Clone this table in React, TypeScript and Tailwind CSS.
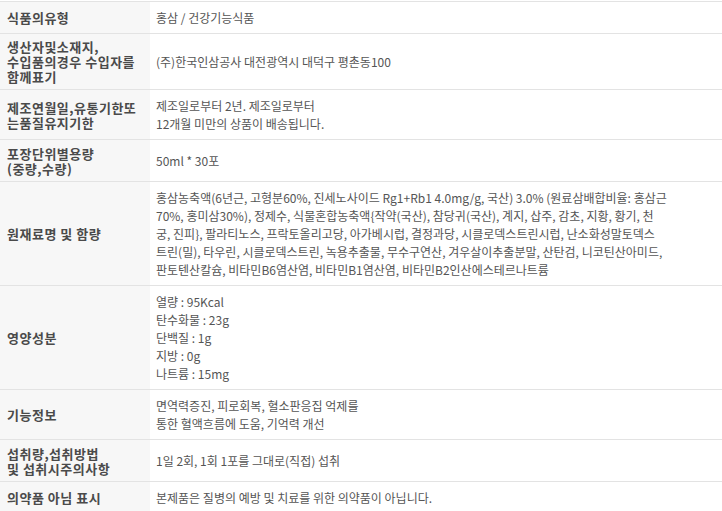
import React from "react";

type Row = { h: string; label: React.ReactNode; value: React.ReactNode };

const rows: Row[] = [
  { h: "h-[32px]", label: "식품의유형", value: "홍삼 / 건강기능식품" },
  {
    h: "h-[56px]",
    label: (
      <>
        생산자및소재지,
        <br />
        수입품의경우 수입자를
        <br />
        함께표기
      </>
    ),
    value: "(주)한국인삼공사 대전광역시 대덕구 평촌동100",
  },
  {
    h: "h-[50px]",
    label: (
      <>
        제조연월일,유통기한또
        <br />
        는품질유지기한
      </>
    ),
    value: (
      <>
        제조일로부터 2년. 제조일로부터
        <br />
        12개월 미만의 상품이 배송됩니다.
      </>
    ),
  },
  {
    h: "h-[42px]",
    label: (
      <>
        포장단위별용량
        <br />
        (중량,수량)
      </>
    ),
    value: "50ml * 30포",
  },
  {
    h: "h-[104px]",
    label: "원재료명 및 함량",
    value: (
      <>
        <div>홍삼농축액(6년근, 고형분60%, 진세노사이드 Rg1+Rb1 4.0mg/g, 국산) 3.0% (원료삼배합비율: 홍삼근</div>
        <div>70%, 홍미삼30%), 정제수, 식물혼합농축액{"{"}작약(국산), 참당귀(국산), 계지, 삽주, 감초, 지황, 황기, 천</div>
        <div>궁, 진피{"}"}, 팔라티노스, 프락토올리고당, 아가베시럽, 결정과당, 시클로덱스트린시럽, 난소화성말토덱스</div>
        <div>트린(밀), 타우린, 시클로덱스트린, 녹용추출물, 무수구연산, 겨우살이추출분말, 산탄검, 니코틴산아미드,</div>
        <div>판토텐산칼슘, 비타민B6염산염, 비타민B1염산염, 비타민B2인산에스테르나트륨</div>
      </>
    ),
  },
  {
    h: "h-[104px]",
    label: "영양성분",
    value: (
      <>
        <div>열량 : 95Kcal</div>
        <div>탄수화물 : 23g</div>
        <div>단백질 : 1g</div>
        <div>지방 : 0g</div>
        <div>나트륨 : 15mg</div>
      </>
    ),
  },
  {
    h: "h-[50px]",
    label: "기능정보",
    value: (
      <>
        면역력증진, 피로회복, 혈소판응집 억제를
        <br />
        통한 혈액흐름에 도움, 기억력 개선
      </>
    ),
  },
  {
    h: "h-[42px]",
    label: (
      <>
        섭취량,섭취방법
        <br />
        및 섭취시주의사항
      </>
    ),
    value: "1일 2회, 1회 1포를 그대로(직접) 섭취",
  },
  {
    h: "h-[32px]",
    label: "의약품 아님 표시",
    value: "본제품은 질병의 예방 및 치료를 위한 의약품이 아닙니다.",
  },
];

export default function App() {
  return (
    <div
      className="w-[722px] h-[511px] overflow-hidden bg-white pt-[1px]"
      style={{ fontFamily: '"Noto Sans CJK KR", "Noto Sans", sans-serif' }}
    >
      <div className="border-t border-[#e3e3e3]">
        {rows.map((r, i) => (
          <div
            key={i}
            className={`grid grid-cols-[150px_1fr] border-b border-[#e3e3e3] ${r.h}`}
          >
            <div className="bg-[#f7f7f7] flex items-center pl-[7px] text-[13px] leading-[15px] tracking-[0.5px] font-bold text-[#4a4a4a] whitespace-nowrap">
              <div>{r.label}</div>
            </div>
            <div className="flex items-center pl-[6px] text-[12px] leading-[18px] text-[#555] whitespace-nowrap">
              <div>{r.value}</div>
            </div>
          </div>
        ))}
      </div>
    </div>
  );
}
